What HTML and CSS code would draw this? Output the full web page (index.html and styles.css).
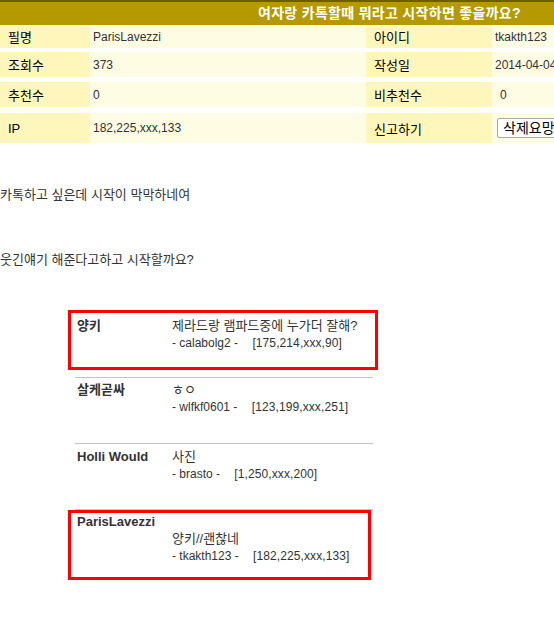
FILE: index.html
```html
<!DOCTYPE html>
<html lang="ko">
<head>
<meta charset="utf-8">
<title>여자랑 카톡할때 뭐라고 시작하면 좋을까요?</title>
<link rel="stylesheet" href="styles.css">
</head>
<body>
<div class="board">
  <div class="head">여자랑 카톡할때 뭐라고 시작하면 좋을까요?</div>
  <div class="row r1">
    <div class="lab">필명</div><div class="val">ParisLavezzi</div>
    <div class="lab lab2">아이디</div><div class="val val2">tkakth123</div>
  </div>
  <div class="row r2">
    <div class="lab">조회수</div><div class="val">373</div>
    <div class="lab lab2">작성일</div><div class="val val2">2014-04-04</div>
  </div>
  <div class="row r3">
    <div class="lab">추천수</div><div class="val">0</div>
    <div class="lab lab2">비추천수</div><div class="val val2 pad">0</div>
  </div>
  <div class="row r4">
    <div class="lab">IP</div><div class="val">182,225,xxx,133</div>
    <div class="lab lab2">신고하기</div><div class="val val2"><button class="btn" type="button">삭제요망</button></div>
  </div>
</div>

<p class="txt t1">카톡하고 싶은데 시작이 막막하네여</p>
<p class="txt t2">웃긴얘기 해준다고하고 시작할까요?</p>

<div class="comments">
  <div class="cmt boxed c1">
    <div class="name">양키</div>
    <div class="body"><span class="ko">제라드랑 램파드중에 누가더 잘해?</span><br>- calabolg2 - <span class="ip">[175,214,xxx,90]</span></div>
  </div>
  <div class="cmt lined c2">
    <div class="name">살케곧싸</div>
    <div class="body"><span class="ko">ㅎㅇ</span><br>- wlfkf0601 - <span class="ip">[123,199,xxx,251]</span></div>
  </div>
  <div class="cmt lined c3">
    <div class="name">Holli Would</div>
    <div class="body"><span class="ko">사진</span><br>- brasto - <span class="ip">[1,250,xxx,200]</span></div>
  </div>
  <div class="sep"></div>
  <div class="cmt boxed c4">
    <div class="name wide">ParisLavezzi</div>
    <div class="body"><span class="ko">양키//괜찮네</span><br>- tkakth123 - <span class="ip">[182,225,xxx,133]</span></div>
  </div>
</div>
</body>
</html>
```

FILE: styles.css
```css
html, body {
  margin: 0;
  padding: 0;
  background: #ffffff;
  overflow: hidden;
}
body {
  font-family: "Liberation Sans", "Noto Sans CJK KR", sans-serif;
  font-size: 12px;
  color: #333333;
}
.board {
  width: 554px;
  overflow: hidden;
}
.head {
  height: 23px;
  border-top: 2px solid #6e5d00;
  background: #b49a00;
  color: #ffffff;
  font-weight: bold;
  font-size: 14px;
  letter-spacing: 0.3px;
  line-height: 23px;
  padding-left: 258px;
  white-space: nowrap;
}
.row {
  display: grid;
  grid-template-columns: 90px 276px 126px 62px;
  white-space: nowrap;
}
.r1 { height: 23px; }
.r2 { height: 25px; margin-top: 4px; }
.r3 { height: 25px; margin-top: 5px; }
.r4 { height: 30px; margin-top: 6px; }
.lab, .val {
  display: flex;
  align-items: center;
  overflow: hidden;
}
.lab {
  background: #fff6bb;
  color: #000000;
  font-size: 13px;
  padding-left: 8px;
}
.lab2 { padding-left: 8px; }
.val {
  background: #fffce4;
  color: #333333;
  padding-left: 3px;
}
.val.pad { padding-left: 8px; }
.btn {
  font-family: "Liberation Sans", "Noto Sans CJK KR", sans-serif;
  font-size: 14px;
  color: #000;
  background: #ffffff;
  border: 1px solid #a8a8a8;
  border-radius: 2px;
  height: 20px;
  padding: 0 5px;
  margin-left: 2px;
  line-height: 18px;
  white-space: nowrap;
}
.txt {
  margin: 0;
  font-size: 13px;
  line-height: 17px;
  color: #333333;
}
.t1 { margin-top: 43px; }
.t2 { margin-top: 48px; }
.comments {
  margin-top: 42px;
  margin-left: 68px;
  width: 310px;
  display: flex;
  flex-direction: column;
  line-height: 17px;
}
.cmt {
  display: grid;
  grid-template-columns: 95px 1fr;
  box-sizing: border-box;
}
.name {
  font-weight: bold;
  font-size: 13px;
  color: #333333;
  white-space: nowrap;
}
.name.wide { grid-column: 1 / 3; }
.c4 .body { grid-column: 2; }
.body { white-space: nowrap; }
.ko { font-size: 13px; }
.ip { margin-left: 11px; letter-spacing: 0.1px; }
.boxed {
  border: 3px solid #ff0000;
}
.c1 {
  width: 310px;
  padding: 4px 0 15px 6px;
}
.lined {
  border-top: 1px solid #c4c4c4;
  margin-left: 7px;
  width: 298px;
  padding-left: 2px;
}
.c2 { margin-top: 7px; padding-top: 3px; padding-bottom: 27px; }
.c3 { padding-top: 4px; padding-bottom: 26px; }
.sep {
  border-top: 1px solid #c4c4c4;
  margin-left: 7px;
  width: 298px;
}
.c4 {
  width: 303px;
  padding: 0 0 12px 6px;
}
```
